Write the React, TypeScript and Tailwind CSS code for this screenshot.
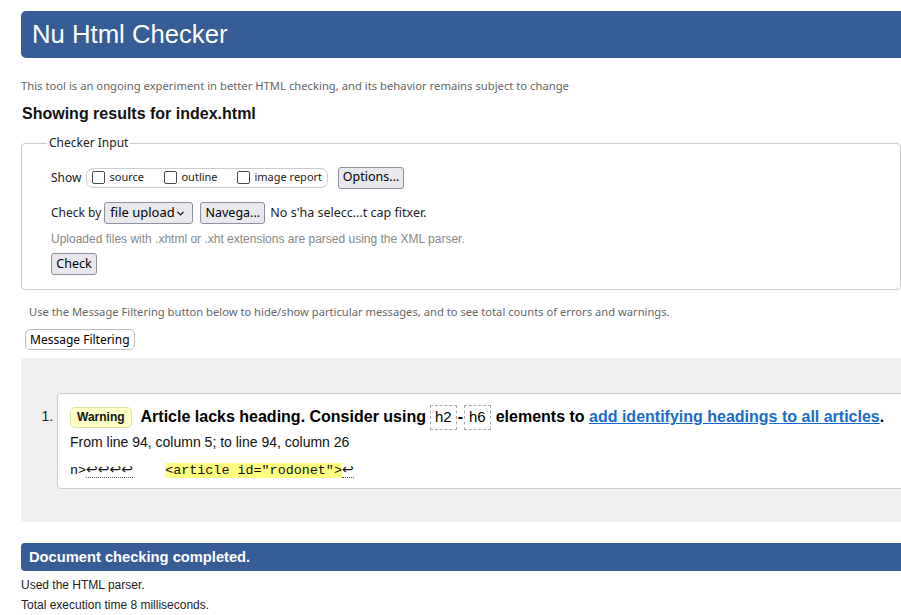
import { ChevronDown } from 'lucide-react';

const SEGOE = { fontFamily: '"Noto Sans", "Open Sans", sans-serif' };

function Checkbox({ label }: { label: string }) {
  return (
    <span className="flex items-center gap-[4px]">
      <span className="w-[13px] h-[13px] border border-[#4a4a4a] rounded-[2px] bg-white" />
      <span className="text-[11px] text-[#222]">{label}</span>
    </span>
  );
}

function Button({ children, className = '' }: { children: React.ReactNode; className?: string }) {
  return (
    <span
      className={`inline-flex items-center justify-center h-[22px] px-[5px] bg-[#e9e9ed] border border-[#8f8f9d] rounded-[3px] text-[12.5px] text-black ${className}`}
    >
      {children}
    </span>
  );
}

export default function App() {
  return (
    <div className="w-[901px] h-[615px] overflow-hidden bg-white" style={{ fontFamily: '"Liberation Sans", Arial, sans-serif' }}>
      <div className="ml-[21px] w-[1000px]">
        {/* Header */}
        <div className="mt-[11px] h-[47px] bg-[#365d95] rounded-l-[5px] pl-[11px] flex items-center">
          <h1 className="text-[25.7px] text-white leading-none">Nu Html Checker</h1>
        </div>

        <p className="mt-[20px] leading-[16px] text-[11.25px] text-[#666]" style={SEGOE}>
          This tool is an ongoing experiment in better HTML checking, and its behavior remains subject to change
        </p>

        <h2 className="mt-[10px] leading-[20px] text-[16px] font-bold text-[#111] pl-[1px]">Showing results for index.html</h2>

        {/* Checker input */}
        <fieldset className="mt-[11px] w-[880px] border border-[#ccc] rounded-[4px] pl-[29px] pb-[14px]" style={SEGOE}>
          <legend className="-ml-[4px] px-[2px] text-[12px] leading-[16px] text-[#222]">Checker Input</legend>

          <div className="mt-[16px] flex items-center h-[21px]">
            <span className="text-[12px] text-[#222] mr-[5px]">Show</span>
            <span className="flex items-center gap-[15px] h-[20px] pl-[5px] pr-[5px] border border-[#ccc] rounded-[7px]">
              <span className="w-[57px]"><Checkbox label="source" /></span>
              <span className="w-[58px]"><Checkbox label="outline" /></span>
              <Checkbox label="image report" />
            </span>
            <Button className="ml-[10px] w-[66px]">Options...</Button>
          </div>

          <div className="mt-[14px] flex items-center h-[22px]">
            <span className="text-[12px] text-[#222] mr-[3px]">Check by</span>
            <span className="flex items-center justify-between w-[89px] h-[22px] pl-[5px] pr-[6px] bg-[#e9e9ed] border border-[#8f8f9d] rounded-[3px] text-[13px] text-black whitespace-nowrap">
              <span>file upload</span>
              <ChevronDown className="w-[11px] h-[11px] shrink-0" strokeWidth={2.5} />
            </span>
            <Button className="ml-[7px] w-[65px]">Navega...</Button>
            <span className="ml-[5px] text-[12.5px] text-[#222]">No s'ha selecc...t cap fitxer.</span>
          </div>

          <p className="mt-[7px] leading-[16px] text-[12px] text-[#888]" style={{ fontFamily: '"Liberation Sans", Arial, sans-serif' }}>
            Uploaded files with .xhtml or .xht extensions are parsed using the XML parser.
          </p>

          <div className="mt-[6px] flex">
            <Button className="w-[46px]">Check</Button>
          </div>
        </fieldset>

        <p className="mt-[14px] ml-[8px] leading-[16px] text-[11.2px] text-[#666]" style={SEGOE}>
          Use the Message Filtering button below to hide/show particular messages, and to see total counts of errors and warnings.
        </p>

        <div className="mt-[9px] ml-[4px] flex">
          <span className="inline-flex items-center h-[21px] px-[4px] bg-white border border-[#bbb] rounded-[5px] text-[12px] text-black" style={SEGOE}>
            Message Filtering
          </span>
        </div>

        {/* Results */}
        <div className="mt-[8px] bg-[#efefef] rounded-l-[4px] pt-[35px] pb-[33px] pl-[36px]">
          <ol className="list-decimal">
            <li className="text-[14px] marker:text-[#222]">
              <div className="bg-white border border-[#ccc] rounded-l-[4px] pl-[12px] pt-[10px] pb-[7px]">
                <div className="flex items-center h-[26px] text-[16px] font-bold text-black">
                  <span className="inline-flex items-center h-[21px] px-[6px] bg-[#ffffc8] border border-[#e2dfa6] rounded-[5px] text-[12px] font-bold text-[#111] mr-[9px]">
                    Warning
                  </span>
                  <span>Article lacks heading. Consider using</span>
                  <code className="ml-[4px] inline-flex items-center h-[25px] px-[4px] border border-dashed border-[#aaa] font-normal text-[15px]" style={{ fontFamily: '"Liberation Sans", Arial, sans-serif' }}>
                    h2
                  </code>
                  <span className="mx-[1px]">-</span>
                  <code className="inline-flex items-center h-[25px] px-[4px] border border-dashed border-[#aaa] font-normal text-[15px]" style={{ fontFamily: '"Liberation Sans", Arial, sans-serif' }}>
                    h6
                  </code>
                  <span className="ml-[5px]">elements to&nbsp;</span>
                  <a className="text-[#1a6ccc] underline">add identifying headings to all articles</a>
                  <span>.</span>
                </div>
                <p className="mt-[3px] leading-[18px] text-[14px] text-[#111]">From line 94, column 5; to line 94, column 26</p>
                <p className="mt-[8px] leading-[20px] text-[13.4px] text-[#111] whitespace-pre" style={{ fontFamily: '"Liberation Mono", "DejaVu Sans Mono", monospace' }}>
                  <span>n&gt;</span>
                  <span className="border-b border-dotted border-[#555] text-[14px]" style={{ fontFamily: '"DejaVu Sans", sans-serif' }}>↩↩↩↩</span>
                  <span>{'    '}</span>
                  <span className="bg-[#ffff80]">&lt;article id="rodonet"&gt;</span>
                  <span className="border-b border-dotted border-[#555] text-[14px]" style={{ fontFamily: '"DejaVu Sans", sans-serif' }}>↩</span>
                </p>
              </div>
            </li>
          </ol>
        </div>

        {/* Completed */}
        <div className="mt-[21px] h-[28px] bg-[#365d95] rounded-l-[4px] pl-[8px] flex items-center">
          <h2 className="text-[14.7px] font-bold text-white">Document checking completed.</h2>
        </div>
        <p className="mt-[4px] leading-[20px] text-[12px] text-[#222]">Used the HTML parser.</p>
        <p className="leading-[20px] text-[12px] text-[#222]">Total execution time 8 milliseconds.</p>
      </div>
    </div>
  );
}
